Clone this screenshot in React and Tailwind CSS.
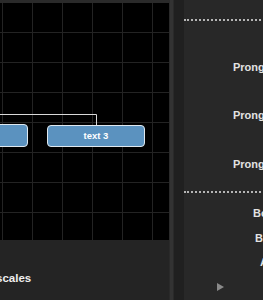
const gridLines = [2, 32, 62, 92, 122, 152, 182, 212];

const Canvas = () => (
  <div className="relative h-[240px] bg-black overflow-hidden">
    <svg className="absolute inset-0" width="169" height="240">
      {gridLines.map((v) => (
        <line key={"v" + v} x1={v + 0.5} y1="0" x2={v + 0.5} y2="240" stroke="#232323" strokeWidth="1" />
      ))}
      {gridLines.map((v) => (
        <line key={"h" + v} x1="0" y1={v + 0.5} x2="169" y2={v + 0.5} stroke="#232323" strokeWidth="1" />
      ))}
      <polyline points="0,114.5 96.5,114.5 96.5,125" fill="none" stroke="#d8d8d8" strokeWidth="1" />
    </svg>
    <div className="absolute top-0 left-0 right-0 h-[3px] bg-[#2a2a2a]" />

    {/* nodes */}
    <div className="absolute left-[-40px] top-[124px] w-[68px] h-[23px] rounded-[4px] border-[1.5px] border-[#dfe8ef] bg-[#5b92bf]" />
    <div className="absolute left-[47px] top-[125px] w-[98px] h-[22px] rounded-[4px] border-[1.5px] border-[#dfe8ef] bg-[#5b92bf] flex items-center justify-center">
      <span className="text-[9.5px] font-bold text-white">text 3</span>
    </div>
  </div>
);

const Row = ({ text, pad, h }) => (
  <div className={`${h} flex items-center`}>
    <span className={`${pad} whitespace-nowrap text-[11px] font-bold text-[#e2e2e2]`}>{text}</span>
  </div>
);

const Dots = () => <div className="h-[2px] border-t-2 border-dotted border-[#b5b5b5] mr-[-10px]" />;

const App = () => {
  return (
    <div className="w-[263px] h-[300px] flex overflow-hidden bg-[#262626] font-['Liberation_Sans',sans-serif]">
      <div className="w-[169px] shrink-0 flex flex-col">
        <Canvas />
        <div className="flex-1 bg-[#242424]">
          <div className="pt-[31px] leading-[12px]">
            <span className="text-[11.5px] font-bold text-[#eeeeee] ml-[-4px]">scales</span>
          </div>
        </div>
      </div>
      <div className="w-[5px] shrink-0 bg-[#333333] border-x border-[#2a2a2a]" />
      <div className="w-[10px] shrink-0 bg-[#202020]" />
      <div className="flex-1 overflow-hidden bg-[#282828] flex flex-col">
        <div className="h-[19px] shrink-0" />
        <Dots />
        <div className="h-[22px] shrink-0" />
        <Row text="Prong Length" pad="pl-[49px]" h="h-[48px]" />
        <Row text="Prong Width" pad="pl-[49px]" h="h-[48px]" />
        <Row text="Prong Spacing" pad="pl-[49px]" h="h-[50px]" />
        <div className="h-[2px] shrink-0" />
        <Dots />
        <Row text="Border" pad="pl-[69px]" h="h-[40px]" />
        <Row text="Bold" pad="pl-[71px]" h="h-[10px]" />
        <Row text="Align" pad="pl-[76px]" h="h-[38px]" />
        <div className="h-[12px] flex items-center pl-[33px]">
          <svg width="7" height="8" viewBox="0 0 7 8">
            <polygon points="0,0 7,4 0,8" fill="#8a8a8a" />
          </svg>
        </div>
      </div>
    </div>
  );
};

export default App;
